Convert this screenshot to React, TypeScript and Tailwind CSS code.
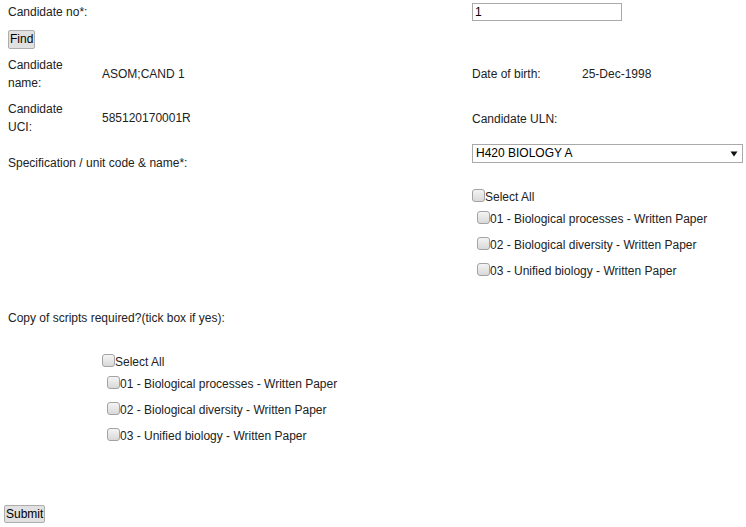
import React from "react";

function Box() {
  return (
    <span className="mt-[1px] mr-[0px] inline-block h-[13px] w-[13px] shrink-0 rounded-[3px] border border-[#a3a3a3] bg-gradient-to-b from-[#f4f4f4] to-[#d9d9d9]" />
  );
}

function CheckList({ indentClass }: { indentClass: string }) {
  const items = [
    "01 - Biological processes - Written Paper",
    "02 - Biological diversity - Written Paper",
    "03 - Unified biology - Written Paper",
  ];
  return (
    <div className={indentClass}>
      <div className="flex h-[18px] items-start leading-[18px]">
        <Box />
        <span>Select All</span>
      </div>
      <div className="mt-[4px] flex flex-col gap-[8px] pl-[5px]">
        {items.map((t) => (
          <div key={t} className="flex h-[18px] items-start leading-[18px]">
            <Box />
            <span>{t}</span>
          </div>
        ))}
      </div>
    </div>
  );
}

export default function App() {
  return (
    <div className="relative h-[527px] w-[746px] overflow-hidden bg-white font-['Liberation_Sans',Arial,sans-serif] text-[12px] text-[#222]">
      {/* Row 1 */}
      <div className="flex pt-[3px]">
        <div className="flex h-[18px] w-[472px] items-center pl-[8px]">Candidate no*:</div>
        <div className="flex h-[18px] w-[150px] items-center border border-[#a9a9a9] bg-white pl-[2px] leading-[16px] text-black">
          1
        </div>
      </div>
      {/* Find */}
      <div className="mt-[9px] pl-[8px]">
        <button className="h-[19px] rounded-[2px] border border-[#adadad] bg-[#e1e1e1] px-[1px] text-[12px] leading-[15px] text-black">
          Find
        </button>
      </div>
      {/* Candidate name */}
      <div className="mt-[7px] flex h-[36px]">
        <div className="flex w-[472px] pl-[8px]">
          <div className="w-[94px] leading-[18px]">
            Candidate
            <br />
            name:
          </div>
          <div className="flex items-center">ASOM;CAND 1</div>
        </div>
        <div className="flex items-center">
          <div className="w-[110px]">Date of birth:</div>
          <div>25-Dec-1998</div>
        </div>
      </div>
      {/* Candidate UCI */}
      <div className="mt-[8px] flex h-[36px]">
        <div className="flex w-[472px] pl-[8px]">
          <div className="w-[94px] leading-[18px]">
            Candidate
            <br />
            UCI:
          </div>
          <div className="flex items-center">585120170001R</div>
        </div>
        <div className="flex items-center pt-[2px]">
          <div>Candidate ULN:</div>
        </div>
      </div>
      {/* Specification */}
      <div className="mt-[8px] flex">
        <div className="w-[472px] pl-[8px]">
          <div className="mt-[10px] leading-[18px]">Specification / unit code &amp; name*:</div>
        </div>
        <div>
          <div className="flex h-[19px] w-[271px] items-center justify-between border border-[#a9a9a9] bg-white pl-[3px] pr-[4px] leading-[17px] text-black">
            <span>H420 BIOLOGY A</span>
            <svg width="8" height="6" viewBox="0 0 8 6">
              <path d="M0.5 0.5 H7.5 L4 5.5 Z" fill="#111" />
            </svg>
          </div>
          <CheckList indentClass="mt-[25px]" />
        </div>
      </div>
      {/* Copy of scripts */}
      <div className="mt-[29px] pl-[8px] leading-[18px]">Copy of scripts required?(tick box if yes):</div>
      <CheckList indentClass="mt-[26px] pl-[102px]" />
      {/* Submit */}
      <div className="mt-[60px] pl-[4px]">
        <button className="h-[18px] rounded-[2px] border border-[#adadad] bg-[#e1e1e1] px-[1px] text-[12px] leading-[14px] text-black">
          Submit
        </button>
      </div>
    </div>
  );
}
